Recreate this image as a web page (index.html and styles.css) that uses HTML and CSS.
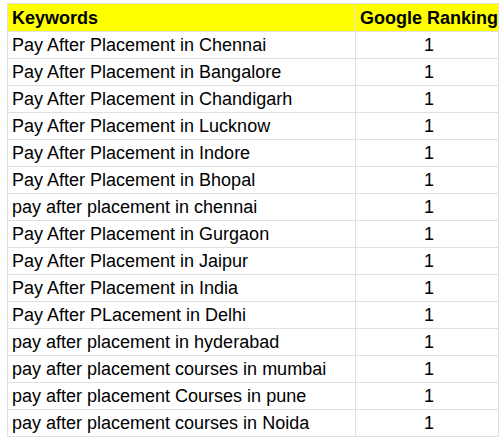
FILE: index.html
```html
<!DOCTYPE html>
<html>
<head>
<meta charset="utf-8">
<link rel="stylesheet" href="styles.css">
</head>
<body>
<table class="sheet">
  <colgroup><col class="c1"><col class="c2"></colgroup>
  <thead>
    <tr class="head"><th class="kw">Keywords</th><th class="rank">Google Ranking</th></tr>
  </thead>
  <tbody>
    <tr><td class="kw">Pay After Placement in Chennai</td><td class="rank">1</td></tr>
    <tr><td class="kw">Pay After Placement in Bangalore</td><td class="rank">1</td></tr>
    <tr><td class="kw">Pay After Placement in Chandigarh</td><td class="rank">1</td></tr>
    <tr><td class="kw">Pay After Placement in Lucknow</td><td class="rank">1</td></tr>
    <tr><td class="kw">Pay After Placement in Indore</td><td class="rank">1</td></tr>
    <tr><td class="kw">Pay After Placement in Bhopal</td><td class="rank">1</td></tr>
    <tr><td class="kw">pay after placement in chennai</td><td class="rank">1</td></tr>
    <tr><td class="kw">Pay After Placement in Gurgaon</td><td class="rank">1</td></tr>
    <tr><td class="kw">Pay After Placement in Jaipur</td><td class="rank">1</td></tr>
    <tr><td class="kw">Pay After Placement in India</td><td class="rank">1</td></tr>
    <tr><td class="kw">Pay After PLacement in Delhi</td><td class="rank">1</td></tr>
    <tr><td class="kw">pay after placement in hyderabad</td><td class="rank">1</td></tr>
    <tr><td class="kw">pay after placement courses in mumbai</td><td class="rank">1</td></tr>
    <tr><td class="kw">pay after placement Courses in pune</td><td class="rank">1</td></tr>
    <tr><td class="kw">pay after placement courses in Noida</td><td class="rank">1</td></tr>
  </tbody>
</table>
</body>
</html>
```
FILE: styles.css
```css
html, body {
  margin: 0;
  padding: 0;
  background: #ffffff;
}
body {
  padding: 3px 0 0 7px;
  font-family: "Liberation Sans", Arial, sans-serif;
  font-size: 18px;
  color: #000000;
}
.sheet {
  border-collapse: collapse;
  table-layout: fixed;
  width: 492px;
}
.c1 { width: 348px; }
.c2 { width: 143px; }
.sheet th, .sheet td {
  border: 1px solid #e0e0e0;
  padding: 0 0 0 4px;
  height: 26px;
  line-height: 20px;
  vertical-align: middle;
  white-space: nowrap;
  overflow: hidden;
}
.sheet th {
  font-weight: bold;
  background: #ffff00;
  height: 27px;
}
.kw { text-align: left; }
.rank { text-align: center; padding: 0; }
```
